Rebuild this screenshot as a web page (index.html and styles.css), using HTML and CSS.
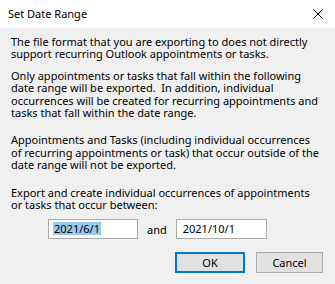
FILE: index.html
```html
<!DOCTYPE html>
<html lang="en">

<head>
	<meta charset="UTF-8">
	<meta name="viewport" content="width=device-width, initial-scale=1.0">
	<title>Set Date Range</title>
	<link rel="stylesheet" href="styles.css">
</head>

<body>
	<div class="dialog">
		<div class="titlebar">
			<span class="title">Set Date Range</span>
			<svg class="close" width="10" height="10" viewBox="0 0 10 10">
				<path d="M0.5 0.5 L9.5 9.5 M9.5 0.5 L0.5 9.5" stroke="#000" stroke-width="1" fill="none" />
			</svg>
		</div>

		<div class="content">
			<p class="msg first">The file format that you are exporting to does not directly<br>support recurring Outlook appointments or tasks.</p>
			<p class="msg second">Only appointments or tasks that fall within the following<br>date range will be exported.&nbsp; In addition, individual<br>occurrences will be created for recurring appointments and<br>tasks that fall within the date range.</p>
			<p class="msg">Appointments and Tasks (including individual occurrences<br>of recurring appointments or task) that occur outside of the<br>date range will not be exported.</p>
			<p class="msg">Export and create individual occurrences of appointments<br>or tasks that occur between:</p>

			<div class="range">
				<div class="field"><span class="sel">2021/6/1</span></div>
				<span class="and">and</span>
				<div class="field">2021/10/1</div>
			</div>
		</div>

		<div class="buttons">
			<button class="btn default">OK</button>
			<button class="btn cancel">Cancel</button>
		</div>
	</div>
</body>
</html>
```

FILE: styles.css
```css
body {
	margin: 0;
	padding: 0;
	background-color: #f0f0f0;
	font-family: "Noto Sans", "Open Sans", sans-serif;
	font-size: 11px;
	color: #000;
}

.dialog {
	width: 335px;
	height: 284px;
	background-color: #f0f0f0;
}

.titlebar {
	height: 28px;
	background-color: #fff;
	display: flex;
	align-items: center;
	justify-content: space-between;
	padding: 0 12px 0 8px;
}

.title {
	font-size: 11px;
	margin-top: -2px;
}

.close {
	margin-top: -1px;
}

.content {
	padding: 8px 0 0 11px;
}

.msg {
	margin: 0;
	line-height: 12.4px;
	white-space: nowrap;
}

.first {
	margin-bottom: 9px;
}

.second,
.msg + .msg + .msg {
	margin-bottom: 15px;
}

.msg + .msg + .msg + .msg {
	margin-bottom: 0;
}

.range {
	display: flex;
	align-items: center;
	margin: 8px 0 0 37px;
}

.field {
	box-sizing: border-box;
	width: 90px;
	height: 20px;
	border: 1px solid #a9a9a9;
	background-color: #fff;
	padding: 0 5px;
	line-height: 18px;
}

.field + .and + .field {
	width: 91px;
	padding-left: 6px;
}

.sel {
	background-color: #99c9ef;
	display: inline-block;
	line-height: 13px;
	padding: 0 1px;
	margin-left: -1px;
}

.and {
	margin: 0 9px 0 9px;
}

.buttons {
	display: flex;
	justify-content: flex-end;
	gap: 11px;
	padding-right: 12px;
	margin-top: 13px;
}

.btn {
	box-sizing: border-box;
	height: 21px;
	background-color: #e1e1e1;
	font-family: "Noto Sans", "Open Sans", sans-serif;
	font-size: 11px;
	color: #000;
	padding: 0;
	outline: none;
}

.default {
	width: 70px;
	border: 2px solid #0078d7;
}

.cancel {
	width: 67px;
	border: 1px solid #adadad;
}
```
